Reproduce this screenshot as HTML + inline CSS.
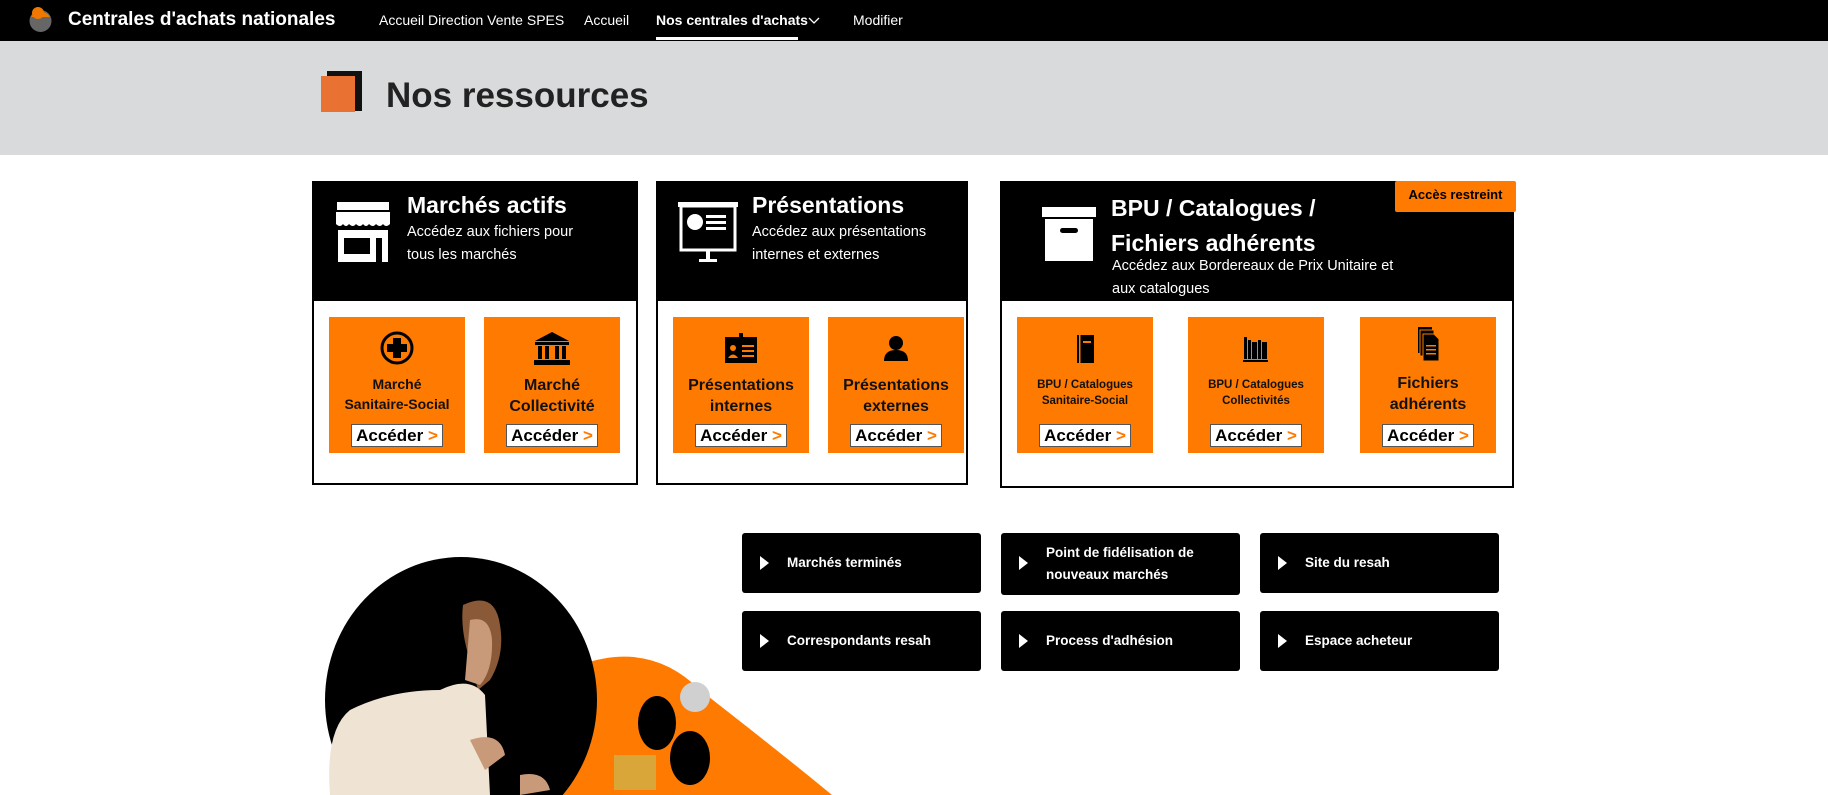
<!DOCTYPE html>
<html><head><meta charset="utf-8"><style>
*{box-sizing:border-box;margin:0;padding:0}
html,body{width:1828px;height:795px;overflow:hidden}
body{background:#fff;font-family:"Liberation Sans",Arial,sans-serif;position:relative}
.abs{position:absolute}
.nav{left:0;top:0;width:1828px;height:41px;background:#000;color:#fff}
.nav span{position:absolute;top:12px;font-size:14px;white-space:nowrap}
.banner{left:0;top:41px;width:1828px;height:114px;background:#d9dadc}
.card{border:2px solid #000;background:#fff}
.hdr{position:absolute;left:0;top:0;right:0;height:118px;background:#000;color:#fff}
.hdr h2{position:absolute;font-size:23px;font-weight:bold;white-space:nowrap}
.hdr p{position:absolute;font-size:14.5px;line-height:23px}
.tile{position:absolute;top:317px;width:136px;height:136px;background:#ff7a00;text-align:center;color:#111;font-weight:bold}
.tile .ic{position:absolute;left:0;right:0;top:14px;height:34px}
.tile .lb{position:absolute;left:0;right:0;top:56px}
.btn{position:absolute;left:22px;top:107px;width:92px;height:23px;background:#fff;border:1px solid #555;font-size:17px;line-height:21px;font-weight:bold;color:#000}
.btn b{color:#ff7a00}
.lk{position:absolute;width:239px;height:60px;background:#000;border-radius:3px;color:#fff;font-size:13.5px;font-weight:bold}
.lk i{position:absolute;left:18px;top:23px;width:0;height:0;border-left:9px solid #fff;border-top:7px solid transparent;border-bottom:7px solid transparent}
.lk span{position:absolute;left:45px;top:50%;transform:translateY(-50%);line-height:22px}
</style></head><body>
<div class="abs nav">
 <svg class="abs" style="left:28px;top:7px" width="25" height="26"><circle cx="12.5" cy="14" r="11" fill="#666"/><path d="M3 10 A11 11 0 0 1 22 10Z" fill="#f07800"/><circle cx="10" cy="6" r="6" fill="#f07800"/></svg>
 <span style="left:68px;top:9px;font-size:19px;font-weight:bold">Centrales d'achats nationales</span>
 <span style="left:379px">Accueil Direction Vente SPES</span>
 <span style="left:584px">Accueil</span>
 <span style="left:656px;font-weight:bold">Nos centrales d'achats</span>
 <div class="abs" style="left:656px;top:37px;width:142px;height:3px;background:#fff"></div>
 <svg class="abs" style="left:808px;top:17px" width="12" height="8"><path d="M1 1 L6 6 L11 1" stroke="#fff" fill="none" stroke-width="1.3"/></svg>
 <span style="left:853px">Modifier</span>
</div>
<div class="abs banner">
 <div class="abs" style="left:327px;top:30px;width:35px;height:40px;background:#111"></div>
 <div class="abs" style="left:321px;top:35px;width:34px;height:36px;background:#e97232"></div>
 <div class="abs" style="left:386px;top:35px;font-size:35px;font-weight:bold;color:#222">Nos ressources</div>
</div>

<div class="abs card" style="left:312px;top:181px;width:326px;height:304px">
 <div class="hdr">
  <svg class="abs" style="left:22px;top:19px" width="54" height="60" viewBox="0 0 54 60"><rect x="1" y="0" width="52" height="8" fill="#fff"/><path d="M0 10 H54 V22 Q50 26 47 22 Q44 26 40 22 Q37 26 33 22 Q30 26 27 22 Q24 26 20 22 Q17 26 13 22 Q10 26 7 22 Q4 26 0 22Z" fill="#fff"/><path d="M2 28 H52 V60 H46 V36 H40 V60 H2Z M8 36 V52 H34 V36Z" fill="#fff" fill-rule="evenodd"/></svg>
  <h2 style="left:93px;top:9px">Marchés actifs</h2>
  <p style="left:93px;top:38px">Accédez aux fichiers pour<br>tous les marchés</p>
 </div>
</div>
<div class="tile" style="left:329px"><svg class="ic" viewBox="0 0 136 34"><circle cx="68" cy="17" r="15" fill="none" stroke="#000" stroke-width="3"/><path d="M64 7 H72 V13 H78 V21 H72 V27 H64 V21 H58 V13 H64Z" fill="#000"/></svg><div class="lb" style="font-size:14px;line-height:20px;top:57px">Marché<br>Sanitaire-Social</div><div class="btn">Accéder <b>&gt;</b></div></div>
<div class="tile" style="left:484px"><svg class="ic" viewBox="0 0 136 34"><path d="M68 1 L85 10 H51Z M51 11 H85 V14 H51Z M54 15 H58 V28 H54Z M61 15 H65 V28 H61Z M71 15 H75 V28 H71Z M78 15 H82 V28 H78Z M50 29 H86 V34 H50Z" fill="#000"/></svg><div class="lb" style="font-size:16px;line-height:21px;top:58px">Marché<br>Collectivité</div><div class="btn">Accéder <b>&gt;</b></div></div>

<div class="abs card" style="left:656px;top:181px;width:312px;height:304px">
 <div class="hdr">
  <svg class="abs" style="left:20px;top:19px" width="60" height="62" viewBox="0 0 60 62"><rect x="0" y="0" width="60" height="5" fill="#fff"/><rect x="3" y="4" width="54" height="44" fill="none" stroke="#fff" stroke-width="3"/><circle cx="17" cy="20" r="8" fill="#fff"/><rect x="28" y="13" width="20" height="3" fill="#fff"/><rect x="28" y="19" width="20" height="3" fill="#fff"/><rect x="28" y="25" width="20" height="3" fill="#fff"/><rect x="28" y="48" width="4" height="10" fill="#fff"/><rect x="21" y="57" width="18" height="3" fill="#fff"/></svg>
  <h2 style="left:94px;top:9px">Présentations</h2>
  <p style="left:94px;top:38px">Accédez aux présentations<br>internes et externes</p>
 </div>
</div>
<div class="tile" style="left:673px"><svg class="ic" viewBox="0 0 136 34"><rect x="52" y="6" width="32" height="26" fill="#000"/><rect x="66" y="2" width="4" height="6" fill="#000"/><circle cx="60" cy="17" r="3" fill="#ff7a00"/><path d="M55 27 Q60 20 65 27Z" fill="#ff7a00"/><rect x="69" y="14" width="12" height="2" fill="#ff7a00"/><rect x="69" y="19" width="12" height="2" fill="#ff7a00"/><rect x="69" y="24" width="12" height="2" fill="#ff7a00"/></svg><div class="lb" style="font-size:16px;line-height:21px;top:58px">Présentations<br>internes</div><div class="btn">Accéder <b>&gt;</b></div></div>
<div class="tile" style="left:828px"><svg class="ic" viewBox="0 0 136 34"><circle cx="68" cy="12" r="7" fill="#000"/><path d="M56 30 Q56 19 68 19 Q80 19 80 30Z" fill="#000"/></svg><div class="lb" style="font-size:16px;line-height:21px;top:58px">Présentations<br>externes</div><div class="btn">Accéder <b>&gt;</b></div></div>

<div class="abs card" style="left:1000px;top:181px;width:514px;height:307px">
 <div class="hdr">
  <svg class="abs" style="left:40px;top:24px" width="54" height="54" viewBox="0 0 54 54"><rect x="0" y="0" width="54" height="10" fill="#fff"/><rect x="3" y="12" width="48" height="42" fill="#fff"/><rect x="18" y="21" width="18" height="5" rx="2.5" fill="#000"/></svg>
  <h2 style="left:109px;top:8px;line-height:35px">BPU / Catalogues /<br>Fichiers adhérents</h2>
  <p style="left:110px;top:72px">Accédez aux Bordereaux de Prix Unitaire et<br>aux catalogues</p>
 </div>
 <div class="abs" style="left:393px;top:-2px;width:121px;height:31px;background:#ff7a00;border-radius:2px;color:#000;font-size:13px;font-weight:bold;text-align:center;line-height:28px">Accès restreint</div>
</div>
<div class="tile" style="left:1017px"><svg class="ic" viewBox="0 0 136 34"><rect x="60" y="4" width="17" height="28" fill="#000"/><rect x="62" y="4" width="1.5" height="28" fill="#ff7a00"/><rect x="66" y="10" width="8" height="2" fill="#ff7a00"/></svg><div class="lb" style="font-size:11.5px;line-height:16px;top:60px">BPU / Catalogues<br>Sanitaire-Social</div><div class="btn">Accéder <b>&gt;</b></div></div>
<div class="tile" style="left:1188px"><svg class="ic" viewBox="0 0 136 34"><rect x="56" y="6" width="3" height="22" fill="#000"/><rect x="60" y="9" width="3" height="19" fill="#000"/><rect x="64" y="11" width="5" height="17" fill="#000"/><rect x="70" y="9" width="3" height="19" fill="#000"/><rect x="74" y="11" width="5" height="17" fill="#000"/><rect x="55" y="29" width="25" height="2" fill="#000"/></svg><div class="lb" style="font-size:11.5px;line-height:16px;top:60px">BPU / Catalogues<br>Collectivités</div><div class="btn">Accéder <b>&gt;</b></div></div>
<div class="tile" style="left:1360px"><svg class="ic" viewBox="0 0 136 34" style="top:10px"><rect x="58" y="0" width="14" height="26" fill="#000"/><rect x="60" y="3" width="14" height="26" fill="#000" stroke="#ff7a00" stroke-width="1"/><path d="M63 7 H74 L79 12 V34 H63Z" fill="#000" stroke="#ff7a00" stroke-width="1"/><rect x="66" y="18" width="10" height="1.5" fill="#ff7a00"/><rect x="66" y="22" width="10" height="1.5" fill="#ff7a00"/><rect x="66" y="26" width="10" height="1.5" fill="#ff7a00"/></svg><div class="lb" style="font-size:16px;line-height:21px;top:56px">Fichiers<br>adhérents</div><div class="btn">Accéder <b>&gt;</b></div></div>

<div class="lk" style="left:742px;top:533px"><i></i><span>Marchés terminés</span></div>
<div class="lk" style="left:1001px;top:533px;height:62px"><i></i><span>Point de fidélisation de<br>nouveaux marchés</span></div>
<div class="lk" style="left:1260px;top:533px"><i></i><span>Site du resah</span></div>
<div class="lk" style="left:742px;top:611px"><i></i><span>Correspondants resah</span></div>
<div class="lk" style="left:1001px;top:611px"><i></i><span>Process d'adhésion</span></div>
<div class="lk" style="left:1260px;top:611px"><i></i><span>Espace acheteur</span></div>

<svg class="abs" style="left:300px;top:540px" width="560" height="255" viewBox="300 540 560 255">
 <path d="M580 665 Q650 640 700 690 Q790 760 838 800 L560 800Z" fill="#ff7a00"/>
 <ellipse cx="461" cy="700" rx="136" ry="143" fill="#000"/>
 <circle cx="695" cy="697" r="15" fill="#d0d0d0"/>
 <ellipse cx="657" cy="723" rx="19" ry="27" fill="#000"/>
 <ellipse cx="690" cy="758" rx="20" ry="27" fill="#000"/>
 <rect x="614" y="755" width="42" height="35" fill="#d9a63a"/>
 <path d="M463 605 Q495 590 500 625 Q505 655 490 680 L478 690 L470 660 Q460 630 463 605Z" fill="#8a5a38"/>
 <path d="M470 620 Q490 615 492 640 Q493 670 480 685 L465 680Z" fill="#c89a7a"/>
 <path d="M440 690 Q470 675 485 695 L490 795 L330 795 Q325 730 350 710 Q390 690 440 690Z" fill="#efe3d3"/>
 <path d="M470 740 Q500 730 505 755 L485 770Z" fill="#c89a7a"/>
 <path d="M520 775 Q545 770 550 790 L520 795Z" fill="#c89a7a"/>
</svg>
</body></html>
